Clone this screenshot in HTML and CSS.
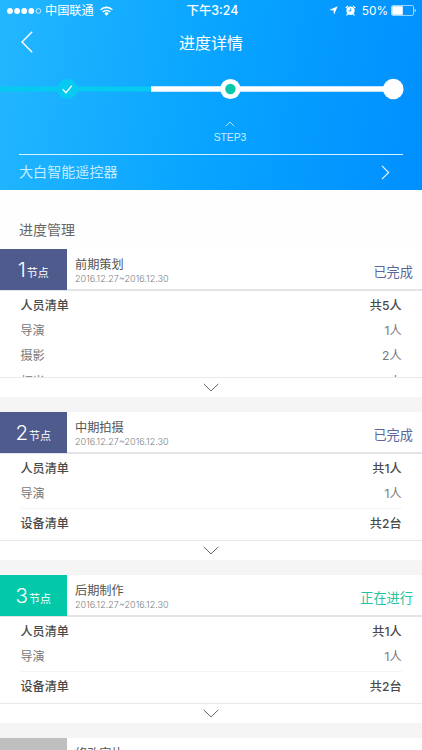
FILE: index.html
```html
<!DOCTYPE html>
<html lang="zh-CN">
<head>
<meta charset="utf-8">
<meta name="viewport" content="width=device-width, initial-scale=1">
<title>进度详情</title>
<link rel="stylesheet" href="styles.css">
</head>
<body>
<header class="hero">
  <div class="status">
    <div class="carrier">
      <svg width="36" height="8" viewBox="0 0 36 8"><g fill="#fff"><circle cx="3" cy="4" r="2.9"/><circle cx="10.1" cy="4" r="2.9"/><circle cx="17.2" cy="4" r="2.9"/><circle cx="24.3" cy="4" r="2.9"/></g><circle cx="31.4" cy="4" r="2.4" fill="none" stroke="#fff" stroke-width=".7"/></svg>
      <span>中国联通</span>
      <svg class="wifi" width="13" height="10" viewBox="0 0 13 10"><g fill="none" stroke="#fff" stroke-width="1.6"><path d="M.7 3.7a8.3 8.3 0 0 1 11.6 0"/><path d="M2.8 6a5.3 5.3 0 0 1 7.4 0"/></g><path d="M4.3 7.4a3.1 3.1 0 0 1 4.4 0L6.5 9.7z" fill="#fff"/></svg>
    </div>
    <div class="time">下午3:24</div>
    <div class="battery">
      <svg width="9" height="9" viewBox="0 0 9 9"><path d="M8.7.3 5 8.7 4.6 4.5.2 4.1z" fill="#fff"/></svg>
      <svg class="alarm" width="11" height="11" viewBox="0 0 11 11"><circle cx="5.5" cy="5.8" r="4.2" fill="#fff"/><path d="M.8 3 3 .9M10.2 3 8 .9M2.6 9l-1 1.3M8.4 9l1 1.3" stroke="#fff" stroke-width="1.3"/><path d="M5.7 3.2V6H3.4" fill="none" stroke="#0b9dff" stroke-width=".9"/></svg>
      <span>50%</span>
      <svg class="cell" width="25" height="11" viewBox="0 0 25 11"><rect x=".5" y=".5" width="22" height="10" rx="1.4" fill="none" stroke="#bfe4ff" stroke-width=".8"/><rect x="1.2" y="1.2" width="10.6" height="8.6" fill="#fff"/><path d="M23.7 3.7c1.3.6 1.3 3 0 3.6z" fill="#fff"/></svg>
    </div>
  </div>
  <div class="nav">
    <svg width="12" height="22" viewBox="0 0 12 22"><path d="M11.2.8 1 11l10.2 10.2" fill="none" stroke="#fff" stroke-width="1.4"/></svg>
    <h1>进度详情</h1>
  </div>
  <svg class="track" width="422" height="24" viewBox="0 0 422 24">
    <path d="M0 12h149" stroke="#07caf0" stroke-width="5.2" stroke-linecap="round"/>
    <path d="M151 12h242" stroke="#fff" stroke-width="5.4"/>
    <circle cx="67.5" cy="12" r="10" fill="#07caf0"/>
    <path d="m62.7 12.2 3.2 3.5 6-7.1" fill="none" stroke="#fff" stroke-width="1.3"/>
    <circle cx="230.4" cy="12" r="10.1" fill="#fff"/><circle cx="230.4" cy="12" r="5.2" fill="#08c8ab"/>
    <circle cx="393.3" cy="12" r="10.3" fill="#fff"/>
  </svg>
  <div class="step">
    <svg width="10" height="6" viewBox="0 0 10 6"><path d="M.8 5.2 5 1l4.2 4.2" fill="none" stroke="#ccebff" stroke-width=".9"/></svg>
    <span>STEP3</span>
  </div>
  <div class="product">
    <span>大白智能遥控器</span>
    <svg width="9" height="15" viewBox="0 0 9 15"><path d="m1 .8 6.6 6.7L1 14.2" fill="none" stroke="#e6f6ff" stroke-width="1.2"/></svg>
  </div>
</header>
<main>
  <h2>进度管理</h2>
  <section class="card">
    <div class="head">
      <div class="node"><b>1</b><span>节点</span></div>
      <div class="info"><h3>前期策划</h3><p>2016.12.27~2016.12.30</p></div>
      <div class="state">已完成</div>
    </div>
    <div class="body">
      <div class="row total"><span>人员清单</span><span>共5人</span></div>
      <div class="row"><span>导演</span><span>1人</span></div>
      <div class="row"><span>摄影</span><span>2人</span></div>
      <div class="row"><span>灯光</span><span>2人</span></div>
    </div>
    <div class="more"><svg width="16" height="9" viewBox="0 0 16 9"><path d="m.7.9 7.3 7 7.3-7" fill="none" stroke="#666" stroke-width="1"/></svg></div>
  </section>
  <section class="card">
    <div class="head">
      <div class="node"><b>2</b><span>节点</span></div>
      <div class="info"><h3>中期拍摄</h3><p>2016.12.27~2016.12.30</p></div>
      <div class="state">已完成</div>
    </div>
    <div class="body">
      <div class="row total"><span>人员清单</span><span>共1人</span></div>
      <div class="row"><span>导演</span><span>1人</span></div>
      <div class="row total device"><span>设备清单</span><span>共2台</span></div>
    </div>
    <div class="more"><svg width="16" height="9" viewBox="0 0 16 9"><path d="m.7.9 7.3 7 7.3-7" fill="none" stroke="#666" stroke-width="1"/></svg></div>
  </section>
  <section class="card active">
    <div class="head">
      <div class="node"><b>3</b><span>节点</span></div>
      <div class="info"><h3>后期制作</h3><p>2016.12.27~2016.12.30</p></div>
      <div class="state">正在进行</div>
    </div>
    <div class="body">
      <div class="row total"><span>人员清单</span><span>共1人</span></div>
      <div class="row"><span>导演</span><span>1人</span></div>
      <div class="row total device"><span>设备清单</span><span>共2台</span></div>
    </div>
    <div class="more"><svg width="16" height="9" viewBox="0 0 16 9"><path d="m.7.9 7.3 7 7.3-7" fill="none" stroke="#666" stroke-width="1"/></svg></div>
  </section>
  <section class="card pending">
    <div class="head">
      <div class="node"></div>
      <div class="info"><h3>修改完片</h3></div>
    </div>
  </section>
</main>
</body>
</html>
```
FILE: styles.css
```css
* { box-sizing: border-box; margin: 0; padding: 0; }
html, body { height: 750px; overflow: hidden; }
body { font-family: "Liberation Sans", "Noto Sans CJK SC", sans-serif; background: #fefefe; color: #666; }
main { height: 560.5px; overflow: hidden; }
svg { display: block; flex: none; }
h1, h2, h3, b { font-weight: 400; }
.hero { height: 189.5px; background: linear-gradient(100deg, #24b7ff 0%, #08a4ff 50%, #008fff 100%); color: #fff; }
.status { height: 21px; display: grid; grid-template-columns: 1fr auto 1fr; align-items: center; padding: 0 6px 0 7px; font-size: 12.2px; line-height: 20px; }
.carrier, .battery { display: flex; align-items: center; }
.carrier span { margin-left: 2px; padding-top: 1px; }
.wifi { margin-left: 6px; }
.time { font-family: Inter, "Noto Sans CJK SC", sans-serif; font-size: 12.4px; font-weight: 500; padding: 1px 0 0 2px; }
.battery { justify-content: flex-end; font-family: Inter, sans-serif; font-size: 11.8px; }
.alarm { margin: 0 6px 0 7px; }
.cell { margin-left: 3px; }
.nav { height: 42px; display: grid; grid-template-columns: 60px 1fr 60px; align-items: center; }
.nav svg { margin-left: 21px; }
.nav h1 { text-align: center; font-size: 16px; line-height: 24px; padding-top: 4px; }
.track { margin-top: 13.5px; }
.step { width: 60px; margin: 20px 0 0 200px; display: flex; flex-direction: column; align-items: center; color: #ccebff; font-size: 10.3px; line-height: 12px; }
.step span { margin-top: 5px; }
.product { margin: 10.5px 19px 0; height: 35px; border-top: 1.5px solid #d9f2ff; display: flex; align-items: center; justify-content: space-between; padding-right: 13px; color: #c4ebff; font-size: 14.1px; line-height: 20px; }
h2 { height: 59.5px; padding: 29px 0 0 19px; font-size: 14px; line-height: 22px; }
.card { height: 163px; background: #fff; border-bottom: 15px solid #f5f5f5; }
.head { height: 42px; display: flex; border-bottom: 2px solid #e4e4e6; }
.node { width: 66.5px; height: 41px; background: #4f5b8d; color: #fff; display: flex; align-items: baseline; justify-content: center; padding: 6.5px 0 0; font-size: 11px; line-height: 28px; }
.node b { font-family: Inter, sans-serif; font-size: 20.5px; font-weight: 300; margin-right: 1px; }
.info { padding: 8px 0 0 8.5px; flex: 1; }
.info h3 { font-size: 12.2px; line-height: 16px; color: #555; }
.info p { font-family: Inter, sans-serif; font-size: 9.05px; line-height: 12px; color: #7c7c7c; white-space: nowrap; font-weight: 300; }
.state { padding: 14px 9px 0 0; font-size: 13.2px; line-height: 20px; color: #5a669c; }
.active .node { background: #04c9a9; }
.active .state { color: #25c3a2; }
.pending .node { background: #bfbfbf; }
.body { height: 86px; padding: 2px 20.5px 0 20.5px; overflow: hidden; }
.row { height: 25.4px; display: flex; align-items: center; justify-content: space-between; font-family: Inter, "Noto Sans CJK SC", sans-serif; font-size: 12.1px; line-height: 20px; color: #777; }
.total { color: #4a4a4a; font-weight: 500; }
.device { margin-top: 1px; height: 32px; border-top: 1px solid #f3f3f3; }
.more { height: 20px; border-top: 1px solid #e9e9e9; display: flex; align-items: center; justify-content: center; }
```
